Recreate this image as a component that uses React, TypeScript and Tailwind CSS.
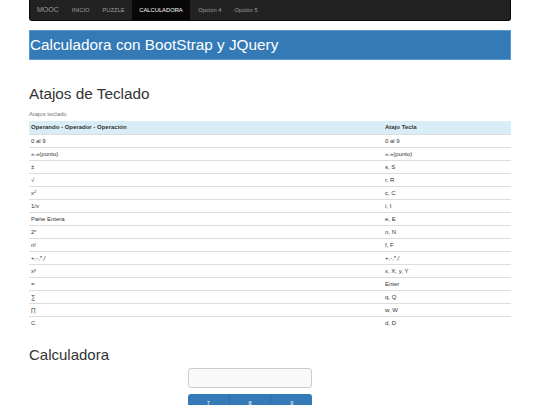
import React from "react";

const rows: [React.ReactNode, string][] = [
  ["0 al 9", "0 al 9"],
  ["«.»(punto)", "«.»(punto)"],
  ["±", "s, S"],
  ["√", "r, R"],
  [<span>x<sup className="text-[4px]">2</sup></span>, "c, C"],
  ["1/x", "i, I"],
  ["Parte Entera", "e, E"],
  [<span>2<sup className="text-[4px]">n</sup></span>, "n, N"],
  ["n!", "f, F"],
  ["+,-,*,/", "+,-,*,/"],
  [<span>x<sup className="text-[4px]">y</sup></span>, "x, X, y, Y"],
  ["=", "Enter"],
  ["∑", "q, Q"],
  ["∏", "w, W"],
  ["C", "d, D"],
];

export default function App() {
  return (
    <div className="w-[540px] h-[405px] overflow-hidden bg-white text-[#333]" style={{ fontFamily: '"Liberation Sans", Arial, sans-serif' }}>
      <div className="w-[482px] mx-auto">
        <div className="h-[21px] bg-[#222] rounded-b-[3px] border border-t-0 border-[#080808] flex items-stretch">
          <div className="text-[7px] text-[#9d9d9d] flex items-center pl-[7px] pr-[7px]">MOOC</div>
          <div className="text-[5.8px] text-[#9d9d9d] flex items-center px-[6px]">INICIO</div>
          <div className="text-[5.8px] text-[#9d9d9d] flex items-center px-[7px]">PUZZLE</div>
          <div className="text-[5.8px] text-white bg-[#080808] flex items-center px-[7.5px]">CALCULADORA</div>
          <div className="text-[5.8px] text-[#9d9d9d] flex items-center pl-[8px] pr-[6px]">Opción 4</div>
          <div className="text-[5.8px] text-[#9d9d9d] flex items-center px-[7px]">Opción 5</div>
        </div>
        <div className="mt-[9px] h-[30px] bg-[#337ab7] border border-[#5b98cf] flex items-center pl-0">
          <h1 className="text-[15.3px] leading-none text-white">Calculadora con BootStrap y JQuery</h1>
        </div>
        <h2 className="mt-[24px] text-[15.3px] leading-[20px] text-[#333]">Atajos de Teclado</h2>
        <div className="mt-[6px] text-[6px] leading-[8px] text-[#777]">Atajos teclado</div>
        <table className="mt-[3px] w-full border-collapse text-[6px] text-[#333]">
          <thead>
            <tr className="bg-[#d9edf7] h-[13px]">
              <th className="text-left font-bold pl-[2px] w-[354px]">Operando - Operador - Operación</th>
              <th className="text-left font-bold pl-[2px]">Atajo Tecla</th>
            </tr>
          </thead>
          <tbody>
            {rows.map((r, i) => (
              <tr key={i} className="h-[13px] border-t border-[#ddd]">
                <td className="pl-[2px] leading-none">{r[0]}</td>
                <td className="pl-[2px] leading-none">{r[1]}</td>
              </tr>
            ))}
          </tbody>
        </table>
        <h2 className="mt-[17px] text-[15px] leading-[18px] text-[#333]">Calculadora</h2>
        <div className="flex flex-col items-start pl-[159px] mt-[4px]">
          <div className="w-[124px] h-[20px] rounded-[3px] border border-[#ccc] bg-[#f9f9f9]"></div>
          <div className="mt-[6px] w-[124px] h-[14px] flex rounded-t-[3px] overflow-hidden">
            {["7", "8", "9"].map((n, i) => (
              <div key={n} className={`flex-1 bg-[#337ab7] text-white text-[5.5px] flex items-center justify-center pt-[4px] ${i > 0 ? "border-l border-[#2e6da4]" : ""}`}>{n}</div>
            ))}
          </div>
        </div>
      </div>
    </div>
  );
}
